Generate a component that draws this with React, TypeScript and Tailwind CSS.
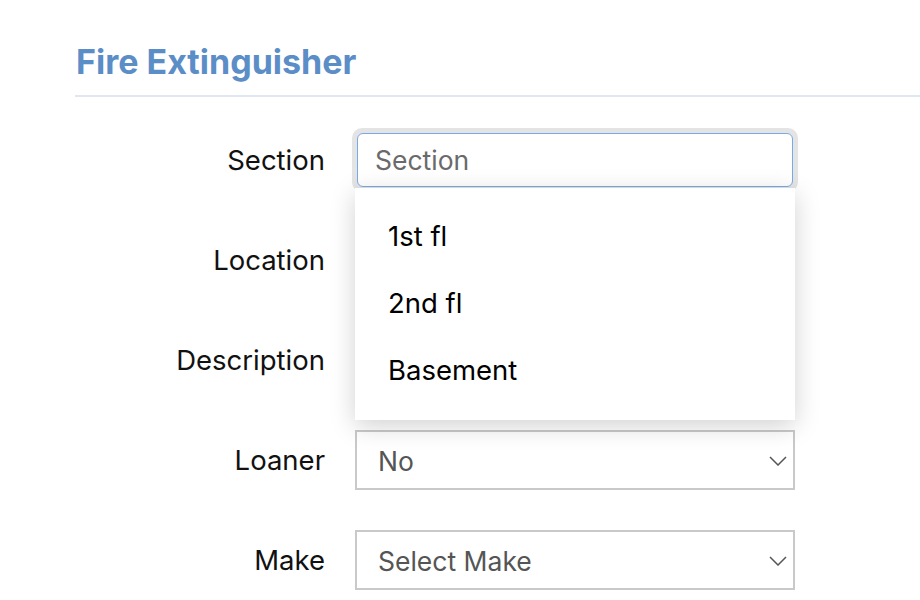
const font = { fontFamily: 'Inter, "Noto Sans", sans-serif' };

function Row({ label, children }: { label: string; children?: React.ReactNode }) {
  return (
    <div className="flex items-center h-[60px] mb-[40px]">
      <div className="w-[250px] text-right text-[27.5px] text-[#111] whitespace-nowrap pt-[2px]">{label}</div>
      <div className="ml-[30px] w-[440px] relative">{children}</div>
    </div>
  );
}

function SelectBox({ value }: { value: string }) {
  return (
    <div className="h-[60px] border-2 border-[#c9c9c9] bg-white flex items-center justify-between pl-[21px] pr-[6px]">
      <span className="text-[26.5px] text-[#555] pt-[3px]">{value}</span>
      <svg width="18" height="10" viewBox="0 0 18 10" fill="none" className="mt-[2px]">
        <polyline points="1,1 9,9 17,1" stroke="#555" strokeWidth="1.5" />
      </svg>
    </div>
  );
}

export default function App() {
  const options = ['1st fl', '2nd fl', 'Basement'];
  return (
    <div className="min-h-screen bg-white overflow-hidden" style={font}>
      <div className="pl-[75px] pt-[40px]">
        <h1 className="pl-[1px] text-[34px] font-bold text-[#5b8dc7] leading-[44px]">Fire Extinguisher</h1>
        <div className="mt-[11px] h-[2px] bg-[#dfe8f0]" />
        <div className="pt-[33px]">
          <Row label="Section">
            <div className="rounded-[10px] bg-[#e4e4e4] p-[5px] -mx-[3px]">
              <div className="h-[54px] rounded-[6px] border border-[#7aaae4] bg-white flex items-center px-[17px]">
                <span className="text-[26.5px] text-[#6a6a6a] pt-[1px]">Section</span>
              </div>
            </div>
            <div className="absolute left-0 right-0 top-[60px] z-10 h-[232px] bg-white shadow-[0_6px_24px_rgba(0,0,0,0.18)] pt-[15px]">
              {options.map((o) => (
                <div key={o} className="h-[67px] flex items-center pl-[33px] text-[27.5px] text-black">
                  {o}
                </div>
              ))}
            </div>
          </Row>
          <Row label="Location">
            <div className="h-[60px] border-2 border-[#c9c9c9]" />
          </Row>
          <Row label="Description">
            <div className="h-[60px] border-2 border-[#c9c9c9]" />
          </Row>
          <Row label="Loaner">
            <SelectBox value="No" />
          </Row>
          <Row label="Make">
            <SelectBox value="Select Make" />
          </Row>
        </div>
      </div>
    </div>
  );
}
